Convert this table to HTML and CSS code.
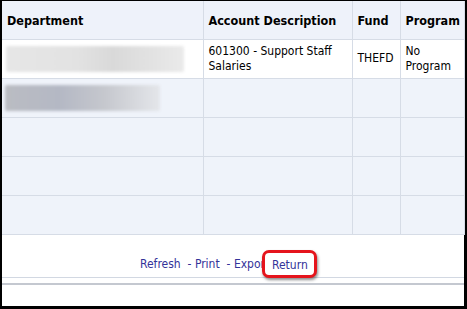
FILE: index.html
```html
<!DOCTYPE html>
<html>
<head>
<meta charset="utf-8">
<link rel="stylesheet" href="styles.css">
</head>
<body>
<div class="frame">
  <table class="grid">
    <colgroup>
      <col class="c1"><col class="c2"><col class="c3"><col class="c4">
    </colgroup>
    <thead>
      <tr class="head">
        <th>Department</th>
        <th>Account Description</th>
        <th>Fund</th>
        <th>Program</th>
      </tr>
    </thead>
    <tbody>
      <tr class="row white">
        <td><div class="blur light"></div></td>
        <td>601300 - Support Staff Salaries</td>
        <td>THEFD</td>
        <td>No Program</td>
      </tr>
      <tr class="row">
        <td><div class="blur dark"></div></td>
        <td></td><td></td><td></td>
      </tr>
      <tr class="row"><td></td><td></td><td></td><td></td></tr>
      <tr class="row"><td></td><td></td><td></td><td></td></tr>
      <tr class="row"><td></td><td></td><td></td><td></td></tr>
    </tbody>
  </table>
  <div class="footer">
    <span class="links"><a class="lnk">Refresh</a> &nbsp;- <a class="lnk">Print</a> &nbsp;- <a class="lnk">Export</a></span>
    <span class="hl"><a class="lnk hltext">Return</a></span>
  </div>
  <div class="rule1"></div>
  <div class="rule2"></div>
</div>
</body>
</html>
```
FILE: styles.css
```css
html, body {
  margin: 0;
  padding: 0;
  background: #000;
  height: 309px;
  overflow: hidden;
}
.frame {
  margin: 1px 3px 0 2px;
  height: 305px;
  background: #fff;
  font-family: "DejaVu Sans Condensed", "DejaVu Sans", sans-serif;
  font-size: 12px;
  color: #000;
}
.grid {
  width: 462px;
  border-collapse: collapse;
  table-layout: fixed;
}
.c1 { width: 201px; }
.c2 { width: 149px; }
.c3 { width: 48px; }
.c4 { width: 64px; }
.grid th, .grid td {
  border: 1px solid #d6dce6;
  padding: 0 5px;
  text-align: left;
  vertical-align: middle;
  line-height: 15px;
}
.grid tr:first-child th { border-top: none; }
.grid tr th:first-child, .grid tr td:first-child { border-left: none; }
.head th {
  height: 38px;
  padding-top: 2px;
  box-sizing: border-box;
  background: #eef2fa;
  font-weight: bold;
  font-size: 12.5px;
}
.row td {
  height: 38px;
  background: #eff3fa;
}
.row.white td { background: #fff; }
.blur {
  height: 26px;
  border-radius: 2px;
  filter: blur(1.5px);
}
.blur.light {
  width: 178px;
  margin-left: -1px;
  background: linear-gradient(90deg, #e6e6e6, #e2e2e2 40%, #d9d9d9 60%, #eaeaea);
}
.blur.dark {
  width: 155px;
  margin-left: -2px;
  background: linear-gradient(90deg, #babcc2, #b4b8c4 35%, #c6c8ce 65%, #e4e6ea);
}
.footer {
  position: relative;
  height: 42px;
  box-sizing: border-box;
  padding-top: 22px;
  padding-left: 138px;
  font-size: 12px;
  line-height: 14px;
  color: #333399;
}
.lnk { color: #333399; }
.hl {
  position: absolute;
  left: 260px;
  top: 15px;
  width: 49px;
  height: 22px;
  border: 3px solid #e5141c;
  border-radius: 7px;
  background: #fff;
  box-shadow: 1px 2px 3px rgba(0,0,0,0.45);
}
.hltext {
  position: absolute;
  left: 7px;
  top: 5px;
}
.rule1 {
  height: 1px;
  background: #d2d8e2;
}
.rule2 {
  height: 2px;
  background: #c4c8d0;
  margin-top: 5px;
}
```
